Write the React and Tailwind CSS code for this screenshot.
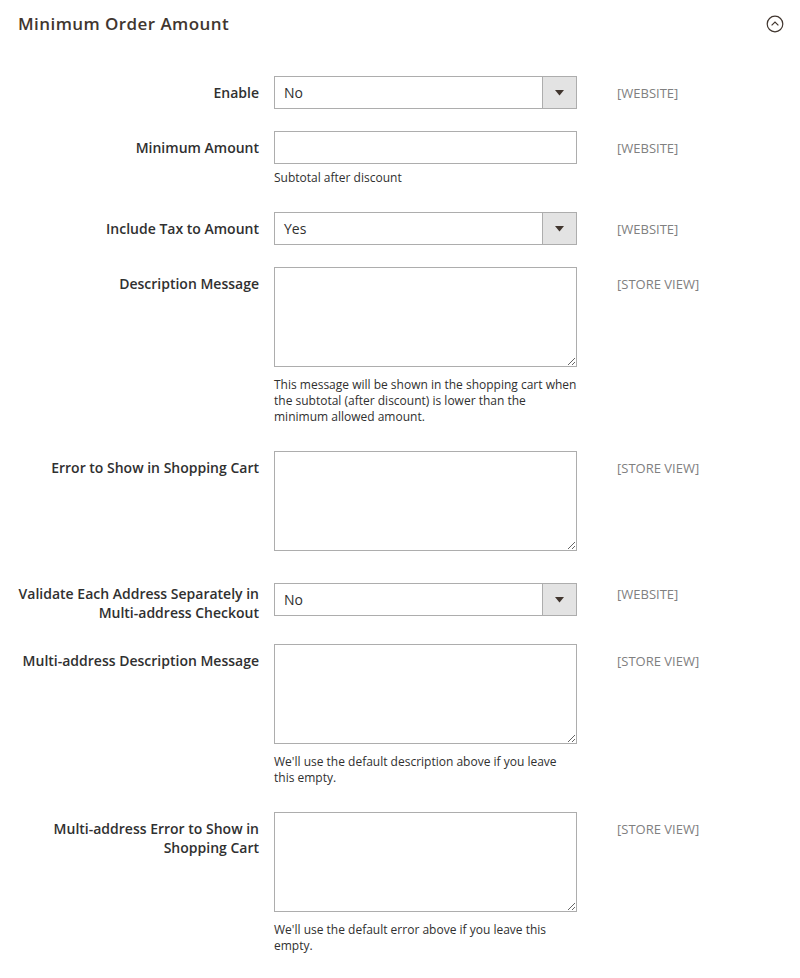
import React from "react";

const rows = [
  { label: "Enable", type: "select", value: "No", scope: "[WEBSITE]", mt: "", pt: "pt-[7px]", spt: "pt-[8px]" },
  { label: "Minimum Amount", type: "input", note: "Subtotal after discount", scope: "[WEBSITE]", mt: "mt-[22px]", pt: "pt-[7px]", spt: "pt-[8px]" },
  { label: "Include Tax to Amount", type: "select", value: "Yes", scope: "[WEBSITE]", mt: "mt-[22px]", pt: "pt-[7px]", spt: "pt-[8px]" },
  {
    label: "Description Message",
    type: "textarea",
    note: "This message will be shown in the shopping cart when the subtotal (after discount) is lower than the minimum allowed amount.",
    scope: "[STORE VIEW]",
    mt: "mt-[22px]",
    pt: "pt-[7px]",
    spt: "pt-[8px]",
  },
  { label: "Error to Show in Shopping Cart", type: "textarea", scope: "[STORE VIEW]", mt: "mt-[22px]", pt: "pt-[7px]", spt: "pt-[8px]" },
  {
    label: "Validate Each Address Separately in Multi-address Checkout",
    type: "select",
    value: "No",
    scope: "[WEBSITE]",
    mt: "mt-[32px]",
    pt: "pt-[1px]",
    spt: "pt-[2px]",
  },
  {
    label: "Multi-address Description Message",
    type: "textarea",
    note: "We'll use the default description above if you leave this empty.",
    scope: "[STORE VIEW]",
    mt: "mt-[22px]",
    pt: "pt-[7px]",
    spt: "pt-[8px]",
  },
  {
    label: "Multi-address Error to Show in Shopping Cart",
    type: "textarea",
    note: "We'll use the default error above if you leave this empty.",
    scope: "[STORE VIEW]",
    mt: "mt-[22px]",
    pt: "pt-[7px]",
    spt: "pt-[8px]",
  },
];

function Select({ value }) {
  return (
    <div className="flex h-[33px] w-[303px] border border-[#adadad] bg-white">
      <div className="flex-1 pl-[9px] text-[14px] leading-[31px] text-[#303030]">{value}</div>
      <div className="flex w-[34px] items-center justify-center border-l border-[#adadad] bg-[#e3e3e3]">
        <svg width="9" height="6" viewBox="0 0 9 6">
          <path d="M0 0 H9 L4.5 5.5 Z" fill="#41362f" />
        </svg>
      </div>
    </div>
  );
}

function Control({ row }) {
  if (row.type === "select") return <Select value={row.value} />;
  if (row.type === "input")
    return <input className="block h-[33px] w-[303px] border border-[#adadad] bg-white outline-none" />;
  return <textarea className="block h-[100px] w-[303px] border border-[#adadad] bg-white outline-none" />;
}

export default function App() {
  return (
    <div className="min-h-screen bg-white pb-[25px]" style={{ fontFamily: '"Open Sans", "Liberation Sans", sans-serif' }}>
      {/* Section header */}
      <div className="flex items-center justify-between pl-[18px] pr-[16px] pt-[12px]">
        <h2 className="text-[17px] font-semibold leading-[24px] tracking-[0.025em] text-[#41362f]">
          Minimum Order Amount
        </h2>
        <svg width="18" height="18" viewBox="0 0 18 18" fill="none">
          <circle cx="9" cy="9" r="7.8" stroke="#41362f" strokeWidth="1.2" />
          <path d="M5.6 10.4 L9 7 L12.4 10.4" stroke="#41362f" strokeWidth="1.2" />
        </svg>
      </div>

      <div className="mt-[40px] flex flex-col">
        {rows.map((row) => (
          <div key={row.label} className={`flex items-start ${row.mt}`}>
            <label
              className={`w-[274px] shrink-0 pl-[12px] pr-[15px] text-right text-[14px] font-semibold leading-[19px] text-[#303030] ${row.pt}`}
            >
              {row.label}
            </label>
            <div className="w-[303px] shrink-0">
              <Control row={row} />
              {row.note && (
                <div
                  className={`${row.type === "textarea" ? "mt-[10px]" : "mt-[6px]"} mb-[4px] text-[12px] leading-[16px] text-[#303030]`}
                >
                  {row.note}
                </div>
              )}
            </div>
            <div className={`ml-[40px] text-[13px] leading-[19px] text-[#808080] ${row.spt}`}>{row.scope}</div>
          </div>
        ))}
      </div>
    </div>
  );
}
